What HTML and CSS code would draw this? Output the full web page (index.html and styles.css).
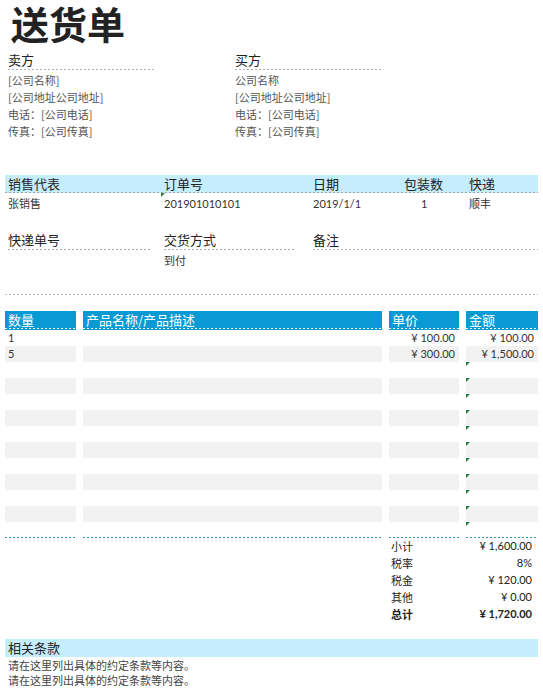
FILE: index.html
```html
<!DOCTYPE html>
<html lang="zh-CN">
<head>
<meta charset="utf-8">
<title>送货单</title>
<link rel="stylesheet" href="styles.css">
</head>
<body>
<div class="page">
  <h1 class="title">送货单</h1>

  <div class="parties">
    <div class="party">
      <div class="party-head">卖方</div>
      <div class="party-body">
        <div class="party-line">[公司名称]</div>
        <div class="party-line">[公司地址公司地址]</div>
        <div class="party-line">电话：[公司电话]</div>
        <div class="party-line">传真：[公司传真]</div>
      </div>
    </div>
    <div class="party">
      <div class="party-head">买方</div>
      <div class="party-body">
        <div class="party-line">公司名称</div>
        <div class="party-line">[公司地址公司地址]</div>
        <div class="party-line">电话：[公司电话]</div>
        <div class="party-line">传真：[公司传真]</div>
      </div>
    </div>
  </div>

  <div class="order">
    <div class="order-head band">
      <span class="oh">销售代表</span>
      <span class="oh">订单号</span>
      <span class="oh">日期</span>
      <span class="oh">包装数</span>
      <span class="oh">快递</span>
    </div>
    <div class="order-vals">
      <span class="ov">张销售</span>
      <span class="ov flag">201901010101</span>
      <span class="ov">2019/1/1</span>
      <span class="ov pack">1</span>
      <span class="ov">顺丰</span>
    </div>
    <div class="order-head2">
      <span class="oh2 c1">快递单号</span>
      <span class="oh2 c2">交货方式</span>
      <span class="oh2 c3">备注</span>
    </div>
    <div class="order-vals">
      <span class="ov"></span>
      <span class="ov">到付</span>
      <span class="ov"></span>
      <span class="ov"></span>
      <span class="ov"></span>
    </div>
  </div>

  <div class="sep"></div>

  <div class="items">
    <div class="irow ihead">
      <span class="hc">数量</span>
      <span class="hc">产品名称/产品描述</span>
      <span class="hc">单价</span>
      <span class="hc">金额</span>
    </div>
    <div class="irow">
      <span class="cell">1</span><span class="cell"></span><span class="cell num">¥ 100.00</span><span class="cell num">¥ 100.00</span>
    </div>
    <div class="irow grey">
      <span class="cell">5</span><span class="cell"></span><span class="cell num">¥ 300.00</span><span class="cell num">¥ 1,500.00</span>
    </div>
    <div class="irow"><span class="cell"></span><span class="cell"></span><span class="cell"></span><span class="cell flag"></span></div>
    <div class="irow grey"><span class="cell"></span><span class="cell"></span><span class="cell"></span><span class="cell flag"></span></div>
    <div class="irow"><span class="cell"></span><span class="cell"></span><span class="cell"></span><span class="cell flag"></span></div>
    <div class="irow grey"><span class="cell"></span><span class="cell"></span><span class="cell"></span><span class="cell flag"></span></div>
    <div class="irow"><span class="cell"></span><span class="cell"></span><span class="cell"></span><span class="cell flag"></span></div>
    <div class="irow grey"><span class="cell"></span><span class="cell"></span><span class="cell"></span><span class="cell flag"></span></div>
    <div class="irow"><span class="cell"></span><span class="cell"></span><span class="cell"></span><span class="cell flag"></span></div>
    <div class="irow grey"><span class="cell"></span><span class="cell"></span><span class="cell"></span><span class="cell flag"></span></div>
    <div class="irow"><span class="cell"></span><span class="cell"></span><span class="cell"></span><span class="cell flag"></span></div>
    <div class="irow grey"><span class="cell"></span><span class="cell"></span><span class="cell"></span><span class="cell flag"></span></div>
    <div class="irow last"><span class="cell"></span><span class="cell"></span><span class="cell"></span><span class="cell flag"></span></div>
    <div class="irow iend"><span class="endc"></span><span class="endc"></span><span class="endc"></span><span class="endc"></span></div>

    <div class="totals">
      <div class="irow trow"><span class="tl">小计</span><span class="tv">¥ 1,600.00</span></div>
      <div class="irow trow"><span class="tl">税率</span><span class="tv">8%</span></div>
      <div class="irow trow"><span class="tl">税金</span><span class="tv">¥ 120.00</span></div>
      <div class="irow trow"><span class="tl">其他</span><span class="tv">¥ 0.00</span></div>
      <div class="irow trow total"><span class="tl">总计</span><span class="tv">¥ 1,720.00</span></div>
    </div>
  </div>

  <div class="terms">
    <div class="terms-head band">相关条款</div>
    <div class="terms-body">
      <div class="terms-line">请在这里列出具体的约定条款等内容。</div>
      <div class="terms-line">请在这里列出具体的约定条款等内容。</div>
    </div>
  </div>
</div>
</body>
</html>
```

FILE: styles.css
```css
* { box-sizing: border-box; }

body {
  margin: 0;
  background: #fff;
  font-family: "Lato", "Noto Sans CJK SC", sans-serif;
  color: #333;
}

.page {
  width: 543px;
  padding: 0 5px;
}

.title {
  margin: -5px 0 -4px;
  padding-left: 6px;
  font-family: "Noto Sans CJK SC", sans-serif;
  font-size: 38px;
  line-height: 55px;
  font-weight: 700;
  color: #222;
}

/* parties */
.parties {
  display: flex;
  gap: 80px;
  padding-left: 3px;
  margin-top: 4px;
}

.party {
  width: 147px;
}

.party-head {
  height: 20px;
  font-family: "Noto Sans CJK SC", sans-serif;
  font-size: 13px;
  line-height: 19px;
  color: #222;
  background: repeating-linear-gradient(90deg, #b0b0b0 0 2px, transparent 2px 4px) left bottom / 100% 1px no-repeat;
}

.party-body {
  padding-top: 2px;
}

.party-line {
  font-family: "Noto Sans CJK SC", sans-serif;
  font-size: 11px;
  line-height: 17px;
  height: 17px;
  color: #555;
  white-space: nowrap;
}

/* order info */
.order {
  margin-top: 35px;
}

.order-head,
.order-vals {
  display: grid;
  grid-template-columns: 156px 149px 91px 65px 1fr;
}

.band {
  background-color: #c6edfb;
}

.order-head {
  height: 18px;
  background-image: repeating-linear-gradient(90deg, #9aa8ae 0 2px, transparent 2px 4px);
  background-position: left bottom;
  background-size: 100% 1px;
  background-repeat: no-repeat;
}

.oh {
  padding-left: 3px;
  font-family: "Noto Sans CJK SC", sans-serif;
  font-size: 13px;
  line-height: 17px;
  color: #222;
}

.order-vals {
  height: 22px;
}

.ov {
  padding-left: 3px;
  font-size: 11px;
  line-height: 22px;
  color: #333;
  white-space: nowrap;
}

.ov.pack {
  padding-left: 20px;
}

.order-head2 {
  display: grid;
  grid-template-columns: 156px 149px 1fr;
  margin-top: 16px;
}

.oh2 {
  margin-left: 3px;
  height: 19px;
  font-family: "Noto Sans CJK SC", sans-serif;
  font-size: 13px;
  line-height: 18px;
  color: #222;
  background: repeating-linear-gradient(90deg, #b0b0b0 0 2px, transparent 2px 4px) left bottom / 100% 1px no-repeat;
}

.oh2.c1 { margin-right: 11px; }
.oh2.c2 { margin-right: 15px; }

.sep {
  margin-top: 22px;
  height: 1px;
  background: repeating-linear-gradient(90deg, #b8b8b8 0 2px, transparent 2px 4px);
}

/* items */
.items {
  margin-top: 16px;
}

.irow {
  display: grid;
  grid-template-columns: 71px 299px 70px 72px;
  column-gap: 7px;
}

.ihead {
  height: 19px;
}

.hc {
  background-color: #0a9ad3;
  background-image: repeating-linear-gradient(90deg, #ffffff 0 2px, transparent 2px 4px);
  background-position: left 0 bottom 1px;
  background-size: 100% 1px;
  background-repeat: no-repeat;
  color: #fff;
  font-family: "Noto Sans CJK SC", sans-serif;
  font-size: 13px;
  line-height: 18px;
  padding-left: 3px;
  white-space: nowrap;
}

.cell {
  height: 16px;
  font-size: 11px;
  line-height: 15px;
  padding-left: 3px;
  color: #333;
  white-space: nowrap;
}

.last .cell {
  height: 15px;
}

.grey .cell {
  background: #f2f2f2;
}

.num {
  text-align: right;
  padding-right: 4px;
}

.flag {
  position: relative;
}

.flag::before {
  content: "";
  position: absolute;
  left: 0;
  top: 0;
  border-top: 4px solid #2a7a3a;
  border-right: 4px solid transparent;
}

.iend {
  height: 1px;
}

.endc {
  height: 1px;
  background: repeating-linear-gradient(90deg, #2a9cae 0 2px, transparent 2px 4px);
}

.trow {
  height: 17px;
}

.tl {
  grid-column: 3;
  padding-left: 2px;
  font-family: "Noto Sans CJK SC", sans-serif;
  font-size: 11px;
  line-height: 16px;
  color: #222;
}

.tv {
  grid-column: 4;
  text-align: right;
  padding-right: 6px;
  font-size: 11px;
  line-height: 16px;
  color: #222;
  white-space: nowrap;
}

.total .tl,
.total .tv {
  font-weight: 700;
}

/* terms */
.terms {
  margin-top: 16px;
}

.terms-head {
  height: 18px;
  padding-left: 3px;
  font-family: "Noto Sans CJK SC", sans-serif;
  font-size: 13px;
  line-height: 18px;
  color: #222;
}

.terms-body {
  padding-top: 1px;
}

.terms-line {
  padding-left: 3px;
  font-family: "Noto Sans CJK SC", sans-serif;
  font-size: 11px;
  line-height: 15px;
  height: 15px;
  color: #444;
  white-space: nowrap;
}
```
